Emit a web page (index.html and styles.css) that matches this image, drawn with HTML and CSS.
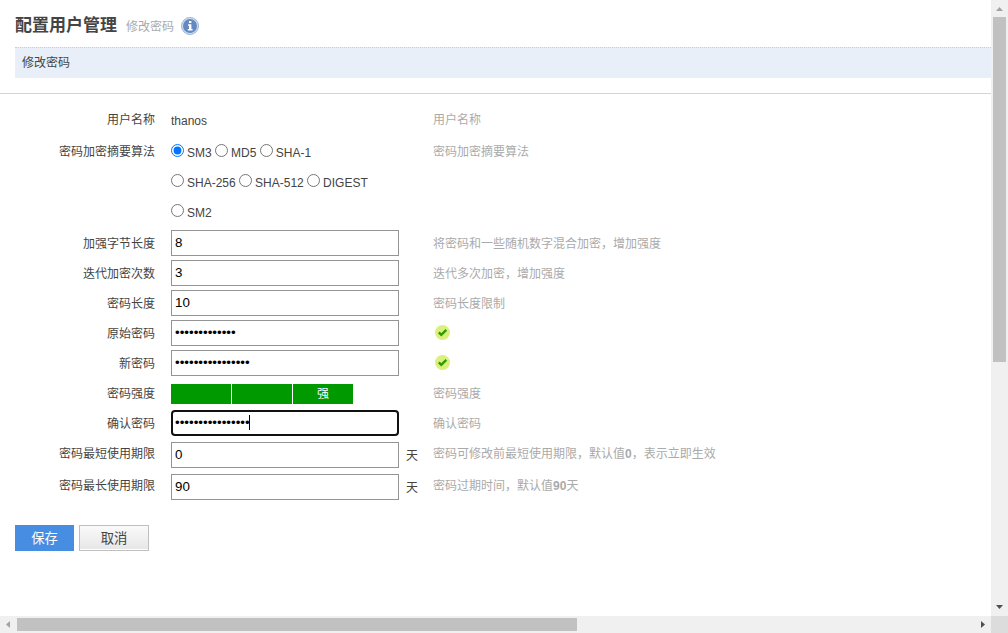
FILE: index.html
```
<!DOCTYPE html>
<html lang="zh-CN">
<head>
  <meta charset="UTF-8" />
  <meta name="viewport" content="width=device-width, initial-scale=1.0" />
  <title>配置用户管理</title>
  <link rel="stylesheet" href="styles.css">
</head>
<body>
  <main class="page">
    <header class="page-header">
      <h1>配置用户管理</h1>
      <span class="subtitle">修改密码</span>
      <svg class="info-icon" viewBox="0 0 18 18" aria-hidden="true">
        <circle cx="9" cy="9" r="8.5" fill="#d3deef" stroke="#9db4d8" stroke-width="1" />
        <circle cx="9" cy="9" r="7" fill="#6488c0" />
        <path d="M8 4h2.4v2H8zM7 7.2h3.4v4.8h1.2v1.6H6.8V12H8V8.700H7z" fill="#fff" />
      </svg>
    </header>
    <h2 class="section-title">修改密码</h2>

    <form>
      <div class="fields">
        <div class="row row-name">
          <span class="label">用户名称</span>
          <div class="field text">thanos</div>
          <span class="hint">用户名称</span>
        </div>
        <div class="row row-algorithm">
          <span class="label" id="algorithmLabel">密码加密摘要算法</span>
          <div class="field">
            <div class="radios" role="radiogroup" aria-labelledby="algorithmLabel">
              <label><input type="radio" name="algorithm" checked>SM3</label>
              <label><input type="radio" name="algorithm">MD5</label>
              <label><input type="radio" name="algorithm">SHA-1</label>
              <label><input type="radio" name="algorithm">SHA-256</label>
              <label><input type="radio" name="algorithm">SHA-512</label>
              <label><input type="radio" name="algorithm">DIGEST</label>
              <label><input type="radio" name="algorithm">SM2</label>
            </div>
          </div>
          <span class="hint">密码加密摘要算法</span>
        </div>
        <div class="row">
          <label class="label" for="saltLength">加强字节长度</label>
          <div class="field"><input class="input" type="text" id="saltLength" value="8"></div>
          <span class="hint">将密码和一些随机数字混合加密，增加强度</span>
        </div>
        <div class="row">
          <label class="label" for="iterations">迭代加密次数</label>
          <div class="field"><input class="input" type="text" id="iterations" value="3"></div>
          <span class="hint">迭代多次加密，增加强度</span>
        </div>
        <div class="row">
          <label class="label" for="passwordLength">密码长度</label>
          <div class="field"><input class="input" type="text" id="passwordLength" value="10"></div>
          <span class="hint">密码长度限制</span>
        </div>
        <div class="row">
          <label class="label" for="oldPassword">原始密码</label>
          <div class="field"><input class="input" type="password" id="oldPassword" value="1234567890123"></div>
          <span class="hint valid">
            <svg class="check-icon" viewBox="0 0 15 15" aria-hidden="true">
              <circle cx="7.5" cy="7.5" r="7.5" fill="#daf07c" />
              <path d="M3.8 7.4l2.5 2.5 5-5" fill="none" stroke="#329b00" stroke-width="2.4" />
            </svg>
          </span>
        </div>
        <div class="row">
          <label class="label" for="newPassword">新密码</label>
          <div class="field"><input class="input" type="password" id="newPassword" value="1234567890123456"></div>
          <span class="hint valid">
            <svg class="check-icon" viewBox="0 0 15 15" aria-hidden="true">
              <circle cx="7.5" cy="7.5" r="7.5" fill="#daf07c" />
              <path d="M3.8 7.4l2.5 2.5 5-5" fill="none" stroke="#329b00" stroke-width="2.4" />
            </svg>
          </span>
        </div>
        <div class="row">
          <span class="label">密码强度</span>
          <div class="field">
            <div class="strength"><span></span><span></span><span>强</span></div>
          </div>
          <span class="hint">密码强度</span>
        </div>
        <div class="row">
          <label class="label" for="confirmPassword">确认密码</label>
          <div class="field">
            <input class="input focused" type="password" id="confirmPassword" value="1234567890123456">
            <i class="caret"></i>
          </div>
          <span class="hint">确认密码</span>
        </div>
        <div class="row row-days">
          <label class="label" for="minDays">密码最短使用期限</label>
          <div class="field"><input class="input" type="text" id="minDays" value="0"><span class="unit">天</span></div>
          <span class="hint">密码可修改前最短使用期限，默认值<b>0</b>，表示立即生效</span>
        </div>
        <div class="row row-days">
          <label class="label" for="maxDays">密码最长使用期限</label>
          <div class="field"><input class="input" type="text" id="maxDays" value="90"><span class="unit">天</span></div>
          <span class="hint">密码过期时间，默认值<b>90</b>天</span>
        </div>
      </div>
      <div class="actions">
        <button type="submit" class="btn btn-save">保存</button>
        <button type="button" class="btn btn-cancel">取消</button>
      </div>
    </form>
  </main>

  <div class="scrollbar vertical" aria-hidden="true">
    <svg class="arrow muted" viewBox="0 0 17 17"><path d="M5 11h7L8.500 7z" /></svg>
    <div class="track"><div class="thumb"></div></div>
    <svg class="arrow" viewBox="0 0 17 17"><path d="M5 6h7L8.500 10z" /></svg>
  </div>
  <div class="scrollbar horizontal" aria-hidden="true">
    <svg class="arrow muted" viewBox="0 0 17 17"><path d="M10 5v7L6 8.500z" /></svg>
    <div class="track"><div class="thumb"></div></div>
    <svg class="arrow" viewBox="0 0 17 17"><path d="M7 5v7l4-3.500z" /></svg>
  </div>
  <div class="corner"></div>
</body>
</html>
```

FILE: styles.css
```
* {
  box-sizing: border-box;
}

body {
  margin: 0;
  height: 100vh;
  display: grid;
  grid-template-columns: minmax(0, 1fr) 17px;
  grid-template-rows: minmax(0, 1fr) 17px;
  background: #fff;
  color: #444;
  font-family: "Liberation Sans", "Noto Sans CJK SC", sans-serif;
  font-size: 12px;
}

.page {
  overflow: hidden;
}

.page-header {
  display: flex;
  align-items: center;
  height: 47px;
  padding: 4px 15px 0;
}

h1 {
  margin: 0 9px 0 0;
  font-size: 17px;
  line-height: 24px;
}

.subtitle {
  margin-right: 7px;
  color: #aaa;
}

.info-icon {
  width: 18px;
  height: 18px;
}

.section-title {
  margin: 0 0 15px 15px;
  padding: 1px 7px 0;
  border-top: 1px dotted #ccc;
  background: #e8eff8;
  font-size: 12px;
  font-weight: normal;
  line-height: 29px;
}

.fields {
  padding-top: 11px;
  border-top: 1px solid #d4d4d4;
}

.row {
  display: grid;
  grid-template-columns: 155px 246px 1fr;
  column-gap: 16px;
  min-height: 30px;
  line-height: 30px;
}

.row-name {
  min-height: 32px;
}

.row-algorithm {
  min-height: 92px;
}

.row-days {
  min-height: 32px;
}

.label {
  text-align: right;
}

.field {
  position: relative;
  padding-top: 1px;
}

.row-days .field {
  display: flex;
  padding-top: 3px;
}

.hint {
  color: #aaa;
}

.radios {
  width: 200px;
}

.radios label {
  white-space: nowrap;
}

.radios input {
  width: 13px;
  height: 13px;
  margin: 0 3px 0 0;
}

.input {
  display: block;
  flex: none;
  width: 228px;
  height: 26px;
  padding: 0 3px 2px;
  border: 1px solid #949494;
  background: #fff;
  color: #000;
  font-family: inherit;
}

.input.focused {
  padding: 0 2px 2px;
  border: 2px solid #101010;
  border-radius: 4px;
  outline: none;
}

.caret {
  position: absolute;
  top: 6px;
  left: 78px;
  width: 1px;
  height: 15px;
  background: #000;
}

.unit {
  margin-left: 7px;
  line-height: 28px;
}

.valid {
  padding: 6px 0 0 2px;
}

.check-icon {
  display: block;
  width: 15px;
  height: 15px;
}

.strength {
  display: flex;
  gap: 1px;
  padding-top: 4px;
}

.strength span {
  width: 60px;
  height: 20px;
  background: #090;
  color: #fff;
  line-height: 20px;
  text-align: center;
}

.actions {
  display: flex;
  gap: 5px;
  padding: 22px 15px;
}

.btn {
  height: 26px;
  padding: 0 0 2px;
  font-family: inherit;
}

.btn-save {
  width: 59px;
  border: none;
  background: #478de2;
  color: #fff;
}

.btn-cancel {
  width: 70px;
  border: 1px solid #bfbfbf;
  background: linear-gradient(#fafafa, #e6e6e6);
  box-shadow: inset 0 -1px #fff;
  color: #444;
}

/* scrollbars */
.scrollbar {
  display: flex;
  background: #f0f0f0;
}

.vertical {
  flex-direction: column;
}

.track {
  flex: 1;
}

.thumb {
  background: #c1c1c1;
}

.vertical .thumb {
  width: 13px;
  height: 59.3%;
  margin: 0 2px;
}

.horizontal .track {
  padding: 2px 0;
}

.horizontal .thumb {
  width: 58.5%;
  height: 13px;
}

.arrow {
  flex: none;
  width: 17px;
  height: 17px;
  fill: #505050;
}

.arrow.muted {
  fill: #a3a3a3;
}

.corner {
  background: #dcdcdc;
}
```
